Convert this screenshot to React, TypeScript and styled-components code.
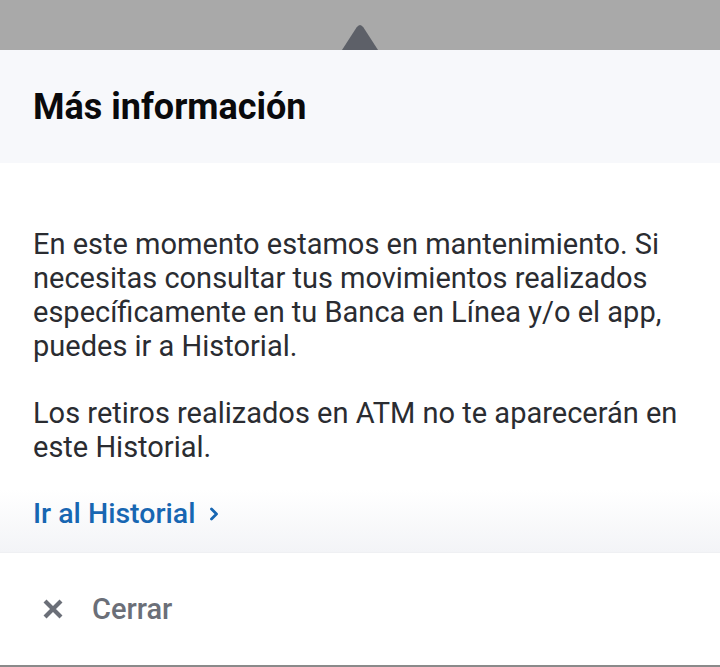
import React from 'react'
import styled, { createGlobalStyle } from 'styled-components'

const GlobalStyle = createGlobalStyle`
  html, body {
    margin: 0;
    padding: 0;
    background: #ffffff;
  }
  body {
    font-family: Roboto, "Noto Sans", "Liberation Sans", sans-serif;
    -webkit-font-smoothing: antialiased;
  }
`

const App: React.FC = () => {
  return (
    <>
      <GlobalStyle />
      <Sheet>
        <Backdrop>
          <Handle width="40" height="26" viewBox="0 0 40 26">
            <path d="M2 26 L16.5 3.5 Q20 -1.5 23.5 3.5 L38 26 Z" fill="#5d6068" />
          </Handle>
        </Backdrop>
        <Header>
          <Title>Más información</Title>
        </Header>
        <Body>
          <Paragraph>
            En este momento estamos en mantenimiento. Si necesitas consultar tus movimientos
            realizados específicamente en tu Banca en Línea y/o el app, puedes ir a Historial.
          </Paragraph>
          <Paragraph>Los retiros realizados en ATM no te aparecerán en este Historial.</Paragraph>
          <LinkButton>
            Ir al Historial
            <svg width="12" height="16" viewBox="0 0 12 16">
              <path d="M3.5 3 L8.5 8 L3.5 13" fill="none" stroke="#1766b2" strokeWidth="2.8" strokeLinecap="round" strokeLinejoin="round" />
            </svg>
          </LinkButton>
        </Body>
        <Footer>
          <CloseButton>
            <svg width="20" height="20" viewBox="0 0 20 20">
              <path d="M3.5 3.5 L16.5 16.5 M16.5 3.5 L3.5 16.5" stroke="#6b6f78" strokeWidth="4.2" strokeLinecap="square" />
            </svg>
            Cerrar
          </CloseButton>
        </Footer>
      </Sheet>
    </>
  )
}

export default App

const Sheet = styled.div`
  display: flex;
  flex-direction: column;
  width: 720px;
  height: 667px;
  overflow: hidden;
  border-bottom: 2px solid #8a8a8a;
  box-sizing: border-box;
`

const Backdrop = styled.div`
  display: flex;
  justify-content: center;
  align-items: flex-end;
  height: 50px;
  background: #a9a9a9;
  flex-shrink: 0;
`

const Handle = styled.svg`
  display: block;
`

const Header = styled.div`
  display: flex;
  align-items: center;
  height: 113px;
  padding: 0 33px;
  background: #f7f8fb;
  flex-shrink: 0;
`

const Title = styled.h1`
  margin: 0;
  font-size: 36px;
  font-weight: 700;
  color: #0a0a0c;
  letter-spacing: 0;
`

const Body = styled.div`
  display: flex;
  flex-direction: column;
  gap: 33px;
  height: 390px;
  padding: 64px 20px 24px 33px;
  box-sizing: border-box;
  background: linear-gradient(to bottom, #ffffff 0%, #ffffff 84%, #f3f4f7 100%);
  border-bottom: 1px solid #eff0f3;
  flex-shrink: 0;
`

const Paragraph = styled.p`
  margin: 0;
  font-size: 29px;
  line-height: 34px;
  color: #2a2c31;
`

const LinkButton = styled.a`
  display: flex;
  align-items: center;
  gap: 13px;
  font-size: 28.5px;
  line-height: 34px;
  font-weight: 500;
  color: #1766b2;
  cursor: pointer;
`

const Footer = styled.div`
  display: flex;
  align-items: center;
  flex: 1;
  padding: 0 43px;
  background: #ffffff;
`

const CloseButton = styled.button`
  display: flex;
  align-items: center;
  gap: 29px;
  padding: 0;
  border: none;
  background: none;
  font-family: inherit;
  font-size: 29px;
  font-weight: 500;
  color: #6b6f78;
  cursor: pointer;
`
